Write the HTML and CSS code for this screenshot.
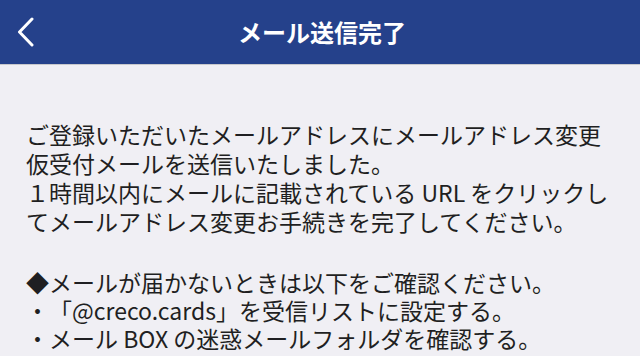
FILE: index.html
```html
<!DOCTYPE html>
<html lang="ja">
<head>
<meta charset="utf-8">
<title>メール送信完了</title>
<link rel="stylesheet" href="styles.css">
</head>
<body>
<header class="navbar">
  <button class="back" aria-label="戻る">
    <svg width="19" height="30" viewBox="0 0 19 30"><path d="M16 2 L3.5 15 L16 28" fill="none" stroke="#fff" stroke-width="3" stroke-linecap="round" stroke-linejoin="round"/></svg>
  </button>
  <h1 class="title">メール送信完了</h1>
  <span class="spacer"></span>
</header>
<main class="content">
  <p class="para">ご登録いただいたメールアドレスにメールアドレス変更<br>仮受付メールを送信いたしました。<br>１時間以内にメールに記載されている URL をクリックし<br>てメールアドレス変更お手続きを完了してください。</p>
  <p class="para gap">◆メールが届かないときは以下をご確認ください。<br>・「@creco.cards」を受信リストに設定する。<br>・メール BOX の迷惑メールフォルダを確認する。</p>
</main>
</body>
</html>
```
FILE: styles.css
```css
html, body {
  margin: 0;
  padding: 0;
  background: #f0eff4;
  font-family: "Noto Sans CJK JP", "Noto Sans", sans-serif;
}
.navbar {
  height: 64px;
  background: #25418b;
  border-bottom: 1px solid #c8c8cc;
  display: flex;
  align-items: center;
  justify-content: space-between;
  padding: 0 12px 0 16px;
}
.back {
  background: none;
  border: 0;
  padding: 0;
  width: 40px;
  height: 40px;
  display: flex;
  align-items: center;
}
.spacer { width: 40px; }
.title {
  margin: 0;
  color: #fff;
  font-size: 24px;
  font-weight: 700;
  line-height: 1;
}
.content {
  padding: 55px 0 0 26px;
  color: #1f1f22;
  font-size: 23px;
  line-height: 29px;
  white-space: nowrap;
  text-spacing-trim: space-all;
}
.para {
  margin: 0;
}
.para.gap {
  margin-top: 32px;
  line-height: 28px;
}
```
